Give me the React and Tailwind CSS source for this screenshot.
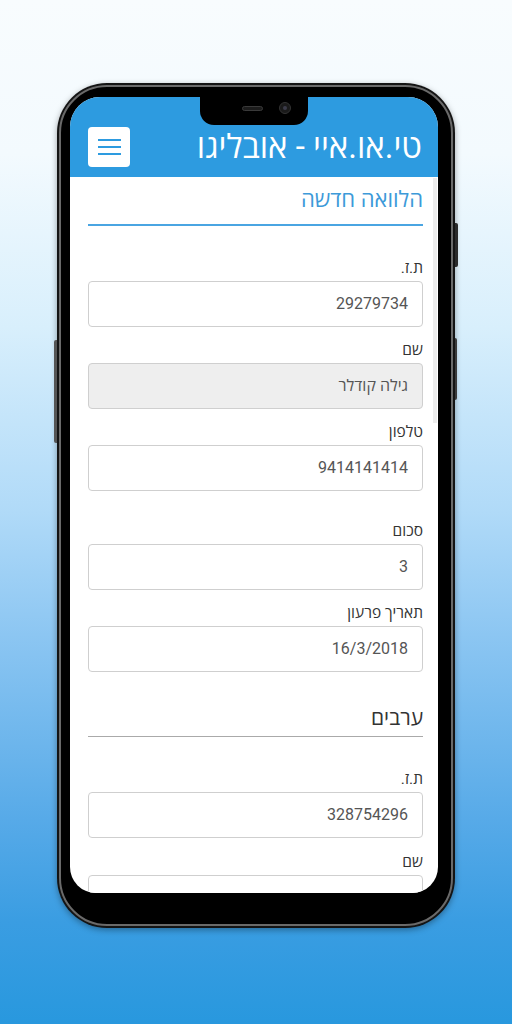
import React from "react";

const FONT = { fontFamily: "Roboto, 'Open Sans', 'Liberation Sans', sans-serif" };

function Field({ label, value, disabled, labelTop = "mt-[13px]" }) {
  return (
    <div className={labelTop}>
      <div className="h-[20px] text-[15.5px] leading-[20px] text-[#333] text-right">{label}</div>
      <div
        className={`mt-[3px] h-[46px] rounded-[4px] border border-[#cfcfcf] flex items-center justify-start pr-[14px] text-[16px] text-[#555] ${
          disabled ? "bg-[#eeeeee]" : "bg-white"
        }`}
      >
        {value}
      </div>
    </div>
  );
}

export default function App() {
  return (
    <div
      style={FONT}
      className="w-[512px] h-[1024px] overflow-hidden flex justify-center pt-[83px] bg-[linear-gradient(to_bottom,#f8fcfe_0%,#f3fafe_15%,#d8effc_32%,#b0daf8_50%,#8cc6f2_62%,#57aae8_80%,#3a9de2_90%,#2898de_100%)]"
    >
      <div className="relative w-[398px] h-[845px] rounded-[50px] bg-[#141414] p-[2px] shadow-[0_2px_6px_rgba(0,0,0,0.35)]">
        {/* side buttons */}
        <div className="absolute right-[-3px] top-[140px] w-[3px] h-[44px] rounded-r-[2px] bg-[#2a2a2a]" />
        <div className="absolute right-[-2px] top-[255px] w-[2px] h-[62px] rounded-r-[2px] bg-[#3a3a3a]" />
        <div className="absolute left-[-3px] top-[257px] w-[3px] h-[103px] rounded-l-[2px] bg-[#555]" />

        <div className="h-full rounded-[48px] border-[2px] border-[#6a6a6a] bg-black pt-[10px] pl-[9px] pr-[13px] pb-[31px]">
          <div className="relative h-full rounded-t-[30px] rounded-b-[26px] bg-white overflow-hidden flex flex-col">
            {/* header */}
            <div className="relative shrink-0 h-[80px] bg-[#2d9be0] flex items-end justify-between pl-[18px] pr-[16px] pb-[10px]">
              <div className="absolute left-[130px] top-0 w-[108px] h-[28px] bg-black rounded-b-[14px]">
                <div className="absolute left-[42px] top-[9px] w-[21px] h-[5px] rounded-full bg-[#1c1c1c] border border-[#3a3a3a]" />
                <div className="absolute left-[79px] top-[5px] w-[12px] h-[12px] rounded-full bg-[#1a1a1a] border border-[#333] flex items-center justify-center">
                  <div className="w-[4px] h-[4px] rounded-full bg-[#3b3b4a]" />
                </div>
              </div>
              <div className="w-[42px] h-[40px] rounded-[4px] bg-white flex flex-col items-center justify-center gap-[5px]">
                <div className="w-[23px] h-[2px] bg-[#2d9be0]" />
                <div className="w-[23px] h-[2px] bg-[#2d9be0]" />
                <div className="w-[23px] h-[2px] bg-[#2d9be0]" />
              </div>
              <div dir="rtl" className="text-white text-[33px] leading-[40px]">
                טי.או.איי - אובליגו
              </div>
            </div>

            {/* scrollbar */}
            <div className="absolute right-[1px] top-[81px] w-[4px] h-[245px] bg-[#ececec]" />

            {/* content */}
            <div dir="rtl" className="pl-[18px] pr-[15px]">
              <div className="pt-[8px] pb-[10px] border-b-2 border-[#4aa5e2]">
                <div className="text-[22px] leading-[29px] text-[#3d9ad9] text-right">הלוואה חדשה</div>
              </div>

              <Field label="ת.ז." value="29279734" labelTop="mt-[32px]" />
              <Field label="שם" value="גילה קודלר" disabled />
              <Field label="טלפון" value="9414141414" />
              <Field label="סכום" value="3" labelTop="mt-[30px]" />
              <Field label="תאריך פרעון" value="16/3/2018" />

              <div className="mt-[32px] pb-[4px] border-b border-[#aaa]">
                <div className="text-[21px] leading-[28px] text-[#333] text-right">ערבים</div>
              </div>

              <Field label="ת.ז." value="328754296" labelTop="mt-[32px]" />
              <Field label="שם" value="" labelTop="mt-[14px]" />
            </div>
          </div>
        </div>
      </div>
    </div>
  );
}
